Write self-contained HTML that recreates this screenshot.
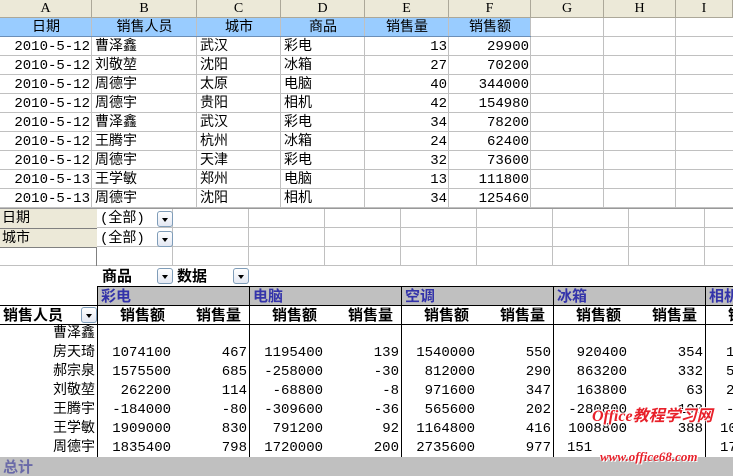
<!DOCTYPE html>
<html><head><meta charset="utf-8"><style>
*{margin:0;padding:0;box-sizing:border-box}
body{width:733px;height:476px;overflow:hidden;background:#fff;font-family:"Liberation Mono","Noto Sans CJK SC",monospace;font-size:14px;color:#000}
#w{position:relative;width:733px;height:476px;overflow:hidden}
.c{position:absolute;height:19px;line-height:21px;white-space:nowrap;overflow:hidden}
.h{position:absolute;top:0;height:18px;background:#ece9d8;border-right:1px solid #aca899;border-bottom:1px solid #aca899;text-align:center;line-height:18px;font-family:"Liberation Serif","Noto Sans CJK SC",serif;font-size:14px}
.r{text-align:right}
.ctr{text-align:center}
.b{font-weight:bold;font-family:"Noto Sans CJK SC",sans-serif;font-size:15px;line-height:20px}
.vl{position:absolute;width:1px;background:#000}
.hl{position:absolute;height:1px;background:#000}
.dd{position:absolute;width:16px;height:16px;border:1px solid #7f9db9;border-radius:3px;background:linear-gradient(#fff,#e3e8f3)}
.dd:after{content:"";position:absolute;left:4px;top:6px;border-left:3.5px solid transparent;border-right:3.5px solid transparent;border-top:4px solid #000}
</style></head><body><div id="w">
<div class="h" style="left:0;width:92px">A</div>
<div class="h" style="left:92px;width:105px">B</div>
<div class="h" style="left:197px;width:84px">C</div>
<div class="h" style="left:281px;width:84px">D</div>
<div class="h" style="left:365px;width:84px">E</div>
<div class="h" style="left:449px;width:82px">F</div>
<div class="h" style="left:531px;width:73px">G</div>
<div class="h" style="left:604px;width:72px">H</div>
<div class="h" style="left:676px;width:57px">I</div>
<div style="position:absolute;left:0;top:18px;width:531px;height:19px;background:#99ccff"></div>
<div style="position:absolute;left:0;top:18px;width:733px;height:190px;background:repeating-linear-gradient(to bottom,transparent 0,transparent 18px,#c0c0c0 18px,#c0c0c0 19px)"></div>
<div class="vl" style="left:91px;top:18px;height:190px;background:#c0c0c0"></div>
<div class="vl" style="left:196px;top:18px;height:190px;background:#c0c0c0"></div>
<div class="vl" style="left:280px;top:18px;height:190px;background:#c0c0c0"></div>
<div class="vl" style="left:364px;top:18px;height:190px;background:#c0c0c0"></div>
<div class="vl" style="left:448px;top:18px;height:190px;background:#c0c0c0"></div>
<div class="vl" style="left:530px;top:18px;height:190px;background:#c0c0c0"></div>
<div class="vl" style="left:603px;top:18px;height:190px;background:#c0c0c0"></div>
<div class="vl" style="left:675px;top:18px;height:190px;background:#c0c0c0"></div>
<div class="hl" style="left:0;top:36px;width:531px;background:#6b8fb8"></div>
<div class="c ctr" style="left:0;top:18px;width:92px">日期</div>
<div class="c ctr" style="left:92px;top:18px;width:105px">销售人员</div>
<div class="c ctr" style="left:197px;top:18px;width:84px">城市</div>
<div class="c ctr" style="left:281px;top:18px;width:84px">商品</div>
<div class="c ctr" style="left:365px;top:18px;width:84px">销售量</div>
<div class="c ctr" style="left:449px;top:18px;width:82px">销售额</div>
<div class="c r" style="left:0;top:37px;width:90px">2010-5-12</div><div class="c" style="left:95px;top:37px">曹泽鑫</div><div class="c" style="left:200px;top:37px">武汉</div><div class="c" style="left:284px;top:37px">彩电</div><div class="c r" style="left:365px;top:37px;width:82px">13</div><div class="c r" style="left:449px;top:37px;width:80px">29900</div>
<div class="c r" style="left:0;top:56px;width:90px">2010-5-12</div><div class="c" style="left:95px;top:56px">刘敬堃</div><div class="c" style="left:200px;top:56px">沈阳</div><div class="c" style="left:284px;top:56px">冰箱</div><div class="c r" style="left:365px;top:56px;width:82px">27</div><div class="c r" style="left:449px;top:56px;width:80px">70200</div>
<div class="c r" style="left:0;top:75px;width:90px">2010-5-12</div><div class="c" style="left:95px;top:75px">周德宇</div><div class="c" style="left:200px;top:75px">太原</div><div class="c" style="left:284px;top:75px">电脑</div><div class="c r" style="left:365px;top:75px;width:82px">40</div><div class="c r" style="left:449px;top:75px;width:80px">344000</div>
<div class="c r" style="left:0;top:94px;width:90px">2010-5-12</div><div class="c" style="left:95px;top:94px">周德宇</div><div class="c" style="left:200px;top:94px">贵阳</div><div class="c" style="left:284px;top:94px">相机</div><div class="c r" style="left:365px;top:94px;width:82px">42</div><div class="c r" style="left:449px;top:94px;width:80px">154980</div>
<div class="c r" style="left:0;top:113px;width:90px">2010-5-12</div><div class="c" style="left:95px;top:113px">曹泽鑫</div><div class="c" style="left:200px;top:113px">武汉</div><div class="c" style="left:284px;top:113px">彩电</div><div class="c r" style="left:365px;top:113px;width:82px">34</div><div class="c r" style="left:449px;top:113px;width:80px">78200</div>
<div class="c r" style="left:0;top:132px;width:90px">2010-5-12</div><div class="c" style="left:95px;top:132px">王腾宇</div><div class="c" style="left:200px;top:132px">杭州</div><div class="c" style="left:284px;top:132px">冰箱</div><div class="c r" style="left:365px;top:132px;width:82px">24</div><div class="c r" style="left:449px;top:132px;width:80px">62400</div>
<div class="c r" style="left:0;top:151px;width:90px">2010-5-12</div><div class="c" style="left:95px;top:151px">周德宇</div><div class="c" style="left:200px;top:151px">天津</div><div class="c" style="left:284px;top:151px">彩电</div><div class="c r" style="left:365px;top:151px;width:82px">32</div><div class="c r" style="left:449px;top:151px;width:80px">73600</div>
<div class="c r" style="left:0;top:170px;width:90px">2010-5-13</div><div class="c" style="left:95px;top:170px">王学敏</div><div class="c" style="left:200px;top:170px">郑州</div><div class="c" style="left:284px;top:170px">电脑</div><div class="c r" style="left:365px;top:170px;width:82px">13</div><div class="c r" style="left:449px;top:170px;width:80px">111800</div>
<div class="c r" style="left:0;top:189px;width:90px">2010-5-13</div><div class="c" style="left:95px;top:189px">周德宇</div><div class="c" style="left:200px;top:189px">沈阳</div><div class="c" style="left:284px;top:189px">相机</div><div class="c r" style="left:365px;top:189px;width:82px">34</div><div class="c r" style="left:449px;top:189px;width:80px">125460</div>

<div class="hl" style="left:0;top:208px;width:733px;background:#999"></div>
<div style="position:absolute;left:0;top:209px;width:733px;height:57px;background:repeating-linear-gradient(to bottom,transparent 0,transparent 18px,#c0c0c0 18px,#c0c0c0 19px)"></div>
<div class="vl" style="left:172px;top:209px;height:57px;background:#c0c0c0"></div>
<div class="vl" style="left:248px;top:209px;height:57px;background:#c0c0c0"></div>
<div class="vl" style="left:324px;top:209px;height:57px;background:#c0c0c0"></div>
<div class="vl" style="left:400px;top:209px;height:57px;background:#c0c0c0"></div>
<div class="vl" style="left:476px;top:209px;height:57px;background:#c0c0c0"></div>
<div class="vl" style="left:552px;top:209px;height:57px;background:#c0c0c0"></div>
<div class="vl" style="left:628px;top:209px;height:57px;background:#c0c0c0"></div>
<div class="vl" style="left:704px;top:209px;height:57px;background:#c0c0c0"></div>
<div class="vl" style="left:96px;top:209px;height:57px;background:#808080"></div>
<div style="position:absolute;left:0;top:209px;width:97px;height:39px;background:#ece9d8;border-bottom:1px solid #808080"></div>
<div class="hl" style="left:0;top:228px;width:97px;background:#808080"></div>
<div class="c" style="left:2px;top:209px">日期</div>
<div class="c" style="left:2px;top:229px">城市</div>
<div class="c" style="left:100px;top:209px">(全部)</div>
<div class="c" style="left:100px;top:229px">(全部)</div>
<div class="dd" style="left:157px;top:211px"></div>
<div class="dd" style="left:157px;top:231px"></div>

<div style="position:absolute;left:0;top:266px;width:733px;height:20px;background:#fff"></div>
<div class="c b" style="left:102px;top:266px">商品</div>
<div class="dd" style="left:157px;top:268px"></div>
<div class="c b" style="left:177px;top:266px">数据</div>
<div class="dd" style="left:233px;top:268px"></div>

<div style="position:absolute;left:97px;top:286px;width:636px;height:19px;background:#c0c0c0"></div>
<div class="hl" style="left:97px;top:286px;width:636px"></div>
<div class="hl" style="left:0;top:305px;width:733px"></div>
<div class="hl" style="left:0;top:324px;width:733px"></div>
<div class="vl" style="left:97px;top:286px;height:171px"></div>
<div class="vl" style="left:249px;top:286px;height:171px"></div>
<div class="vl" style="left:401px;top:286px;height:171px"></div>
<div class="vl" style="left:553px;top:286px;height:171px"></div>
<div class="vl" style="left:705px;top:286px;height:171px"></div>
<div class="c b" style="left:101px;top:286px;color:#3333aa">彩电</div>
<div class="c b" style="left:253px;top:286px;color:#3333aa">电脑</div>
<div class="c b" style="left:405px;top:286px;color:#3333aa">空调</div>
<div class="c b" style="left:557px;top:286px;color:#3333aa">冰箱</div>
<div class="c b" style="left:709px;top:286px;width:24px;color:#3333aa">相机</div>

<div class="c b" style="left:3px;top:305px">销售人员</div>
<div class="dd" style="left:81px;top:307px"></div>
<div class="c b" style="left:120px;top:305px">销售额</div><div class="c b" style="left:196px;top:305px">销售量</div>
<div class="c b" style="left:272px;top:305px">销售额</div><div class="c b" style="left:348px;top:305px">销售量</div>
<div class="c b" style="left:424px;top:305px">销售额</div><div class="c b" style="left:500px;top:305px">销售量</div>
<div class="c b" style="left:576px;top:305px">销售额</div><div class="c b" style="left:652px;top:305px">销售量</div>
<div class="c b" style="left:728px;top:305px;width:5px">销售额</div>

<div class="c r" style="left:0;top:324px;width:95px">曹泽鑫</div>
<div class="c r" style="left:0;top:343px;width:95px">房天琦</div>
<div class="c r" style="left:0;top:362px;width:95px">郝宗泉</div>
<div class="c r" style="left:0;top:381px;width:95px">刘敬堃</div>
<div class="c r" style="left:0;top:400px;width:95px">王腾宇</div>
<div class="c r" style="left:0;top:419px;width:95px">王学敏</div>
<div class="c r" style="left:0;top:438px;width:95px">周德宇</div>

<div class="c r" style="left:98px;top:343px;width:73px">1074100</div><div class="c r" style="left:174px;top:343px;width:73px">467</div><div class="c r" style="left:250px;top:343px;width:73px">1195400</div><div class="c r" style="left:326px;top:343px;width:73px">139</div><div class="c r" style="left:402px;top:343px;width:73px">1540000</div><div class="c r" style="left:478px;top:343px;width:73px">550</div><div class="c r" style="left:554px;top:343px;width:73px">920400</div><div class="c r" style="left:630px;top:343px;width:73px">354</div><div class="c" style="left:726px;top:343px;width:7px">1</div>
<div class="c r" style="left:98px;top:362px;width:73px">1575500</div><div class="c r" style="left:174px;top:362px;width:73px">685</div><div class="c r" style="left:250px;top:362px;width:73px">-258000</div><div class="c r" style="left:326px;top:362px;width:73px">-30</div><div class="c r" style="left:402px;top:362px;width:73px">812000</div><div class="c r" style="left:478px;top:362px;width:73px">290</div><div class="c r" style="left:554px;top:362px;width:73px">863200</div><div class="c r" style="left:630px;top:362px;width:73px">332</div><div class="c" style="left:726px;top:362px;width:7px">5</div>
<div class="c r" style="left:98px;top:381px;width:73px">262200</div><div class="c r" style="left:174px;top:381px;width:73px">114</div><div class="c r" style="left:250px;top:381px;width:73px">-68800</div><div class="c r" style="left:326px;top:381px;width:73px">-8</div><div class="c r" style="left:402px;top:381px;width:73px">971600</div><div class="c r" style="left:478px;top:381px;width:73px">347</div><div class="c r" style="left:554px;top:381px;width:73px">163800</div><div class="c r" style="left:630px;top:381px;width:73px">63</div><div class="c" style="left:726px;top:381px;width:7px">2</div>
<div class="c r" style="left:98px;top:400px;width:73px">-184000</div><div class="c r" style="left:174px;top:400px;width:73px">-80</div><div class="c r" style="left:250px;top:400px;width:73px">-309600</div><div class="c r" style="left:326px;top:400px;width:73px">-36</div><div class="c r" style="left:402px;top:400px;width:73px">565600</div><div class="c r" style="left:478px;top:400px;width:73px">202</div><div class="c r" style="left:554px;top:400px;width:73px">-280800</div><div class="c r" style="left:630px;top:400px;width:73px">-108</div><div class="c" style="left:726px;top:400px;width:7px">-</div>
<div class="c r" style="left:98px;top:419px;width:73px">1909000</div><div class="c r" style="left:174px;top:419px;width:73px">830</div><div class="c r" style="left:250px;top:419px;width:73px">791200</div><div class="c r" style="left:326px;top:419px;width:73px">92</div><div class="c r" style="left:402px;top:419px;width:73px">1164800</div><div class="c r" style="left:478px;top:419px;width:73px">416</div><div class="c r" style="left:554px;top:419px;width:73px">1008800</div><div class="c r" style="left:630px;top:419px;width:73px">388</div><div class="c" style="left:720px;top:419px;width:13px">10</div>
<div class="c r" style="left:98px;top:438px;width:73px">1835400</div><div class="c r" style="left:174px;top:438px;width:73px">798</div><div class="c r" style="left:250px;top:438px;width:73px">1720000</div><div class="c r" style="left:326px;top:438px;width:73px">200</div><div class="c r" style="left:402px;top:438px;width:73px">2735600</div><div class="c r" style="left:478px;top:438px;width:73px">977</div><div class="c" style="left:567px;top:438px">151</div><div class="c" style="left:720px;top:438px;width:13px">17</div>

<div style="position:absolute;left:0;top:457px;width:733px;height:19px;background:#c0c0c0"></div>
<div class="c b" style="left:3px;top:457px;color:#6a6aa8">总计</div>

<div class="c" style="left:592px;top:405px;width:130px;height:24px;line-height:24px;font-family:'Liberation Serif','Noto Sans CJK SC',serif;font-style:italic;font-weight:bold;font-size:16px;color:#e8202a;text-shadow:1px 1px 0 #fff,-1px -1px 0 #fff,1px -1px 0 #fff,-1px 1px 0 #fff">Office教程学习网</div>
<div class="c" style="left:600px;top:447px;width:110px;height:20px;line-height:20px;font-family:'Liberation Serif',serif;font-style:italic;font-weight:bold;font-size:13px;color:#e8202a;text-shadow:1px 1px 0 #fff,-1px -1px 0 #fff">www.office68.com</div>
</div></body></html>
